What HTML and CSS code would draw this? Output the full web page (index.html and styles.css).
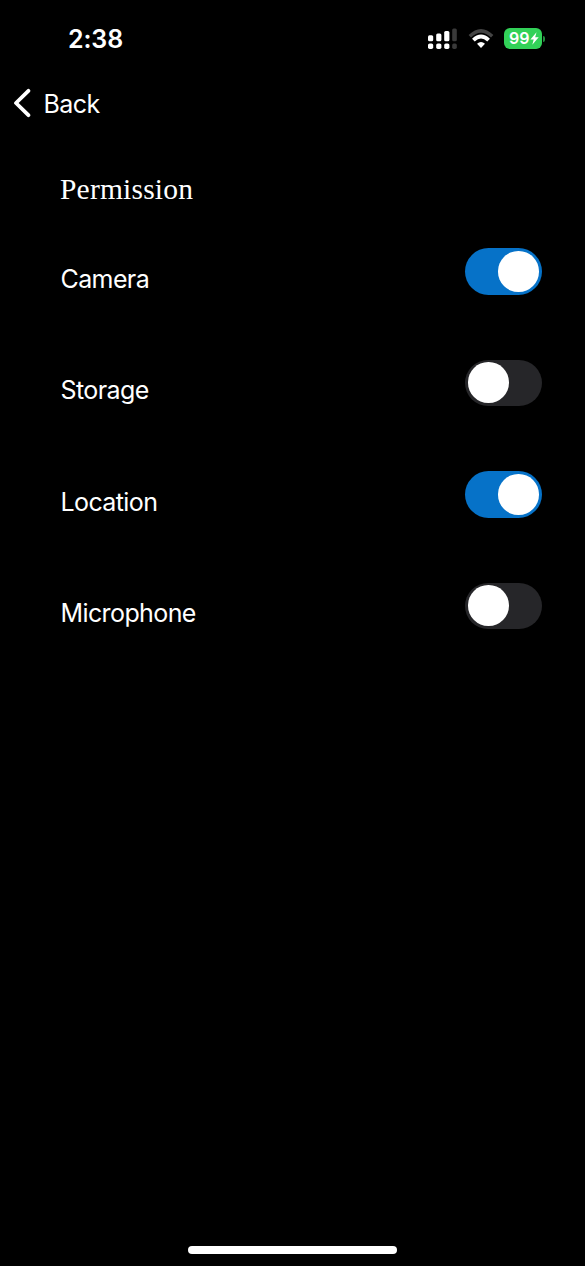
FILE: index.html
```html
<!DOCTYPE html>
<html lang="en">
<head>
<meta charset="utf-8">
<title>Permission</title>
<link rel="stylesheet" href="styles.css">
</head>
<body>
<div class="screen">
  <header class="status">
    <span class="time">2:38</span>
    <div class="indicators">
      <svg class="signal" width="30" height="22" viewBox="0 0 30 22">
        <g fill="#fff">
          <rect x="0" y="7.2" width="5.2" height="6" rx="1.5"/>
          <rect x="8.2" y="5.4" width="5.2" height="7.8" rx="1.5"/>
          <rect x="16.2" y="3" width="5.2" height="10.2" rx="1.5"/>
          <rect x="0" y="15.4" width="5.2" height="5.6" rx="1.7"/>
          <rect x="8.2" y="15.4" width="5.2" height="5.6" rx="1.7"/>
          <rect x="16.2" y="15.4" width="5.2" height="5.6" rx="1.7"/>
        </g>
        <g fill="#3a3a3a">
          <rect x="24.2" y="0.5" width="4.6" height="12.7" rx="1.5"/>
          <rect x="24.2" y="15.4" width="4.6" height="5.6" rx="1.7"/>
        </g>
      </svg>
      <svg class="wifi" width="26" height="22" viewBox="0 0 26 22">
        <path d="M1.8 8.3Q13 -2.6 24.2 8.3" fill="none" stroke="#444" stroke-width="3.4"/>
        <path d="M5.4 12.1Q13 5 20.6 12.1" fill="none" stroke="#fff" stroke-width="3.9"/>
        <path d="M9 15.8Q13 12.4 17 15.8L13 20Z" fill="#fff"/>
      </svg>
      <div class="battery">
        <span>99</span>
        <svg width="9" height="13" viewBox="0 0 9 13"><path d="M6.5 0.3L0.4 7.4H3.7L2.3 12.7L8.7 5.3H5.2Z" fill="#fff"/></svg>
      </div>
      <i class="nub"></i>
    </div>
  </header>
  <nav class="back">
    <svg width="18" height="30" viewBox="0 0 18 30"><path d="M15.4 2.8L3 15L15.4 27.2" fill="none" stroke="#fff" stroke-width="3.8" stroke-linecap="round" stroke-linejoin="round"/></svg>
    <span>Back</span>
  </nav>
  <main class="content">
    <h1 class="title">Permission</h1>
    <div class="row"><span class="label">Camera</span><span class="toggle on"><i class="knob"></i></span></div>
    <div class="row"><span class="label">Storage</span><span class="toggle"><i class="knob"></i></span></div>
    <div class="row"><span class="label">Location</span><span class="toggle on"><i class="knob"></i></span></div>
    <div class="row"><span class="label">Microphone</span><span class="toggle"><i class="knob"></i></span></div>
  </main>
  <div class="home"></div>
</div>
</body>
</html>
```
FILE: styles.css
```css
* { box-sizing: border-box; }
body { margin: 0; background: #000; }
.screen {
  display: flex;
  flex-direction: column;
  height: 1266px;
  padding-bottom: 12px;
  background: #000;
  color: #fff;
  font-family: Inter, "Liberation Sans", sans-serif;
}
svg { display: block; }
.status {
  display: flex;
  justify-content: space-between;
  height: 50px;
  padding: 24px 40px 0 68px;
}
.time { font-size: 25px; line-height: 30px; font-weight: 600; letter-spacing: -0.1px; }
.indicators { display: flex; align-items: flex-start; padding-top: 4px; }
.wifi { margin-left: 10px; }
.battery {
  display: flex;
  align-items: center;
  width: 38px;
  height: 21px;
  margin-left: 10.5px;
  padding-left: 5px;
  border-radius: 6px;
  background: #32d158;
  font-size: 16px;
  font-weight: 600;
  line-height: 21px;
}
.battery svg { margin-left: 0.5px; }
.nub {
  width: 1.6px;
  height: 6px;
  margin: 8px 0 0 1.4px;
  border-radius: 0 2px 2px 0;
  background: #238f3e;
}
.back {
  display: flex;
  align-items: center;
  gap: 13px;
  height: 30px;
  margin-top: 38.5px;
  padding-left: 12.5px;
  font-size: 25px;
  line-height: 30px;
  letter-spacing: -0.6px;
}
.back svg { margin-top: -1px; }
.content { flex: 1; padding: 53px 43px 0 60px; }
.title {
  margin: 0 0 42.5px;
  font: 400 29.5px/34px "Liberation Serif", serif;
  letter-spacing: 0.2px;
}
.row {
  display: flex;
  justify-content: space-between;
  align-items: flex-start;
  height: 111.5px;
}
.label {
  padding: 15.5px 0 0 0.5px;
  font-size: 25px;
  line-height: 30px;
  letter-spacing: -0.6px;
}
.toggle {
  display: flex;
  align-items: center;
  width: 77px;
  height: 46.5px;
  padding: 0 3.2px;
  border-radius: 24px;
  background: #262629;
}
.toggle.on { justify-content: flex-end; background: #0672c8; }
.knob { width: 40.6px; height: 40.6px; border-radius: 50%; background: #fff; }
.home {
  align-self: center;
  width: 209px;
  height: 8px;
  border-radius: 4px;
  background: #fff;
}
```
